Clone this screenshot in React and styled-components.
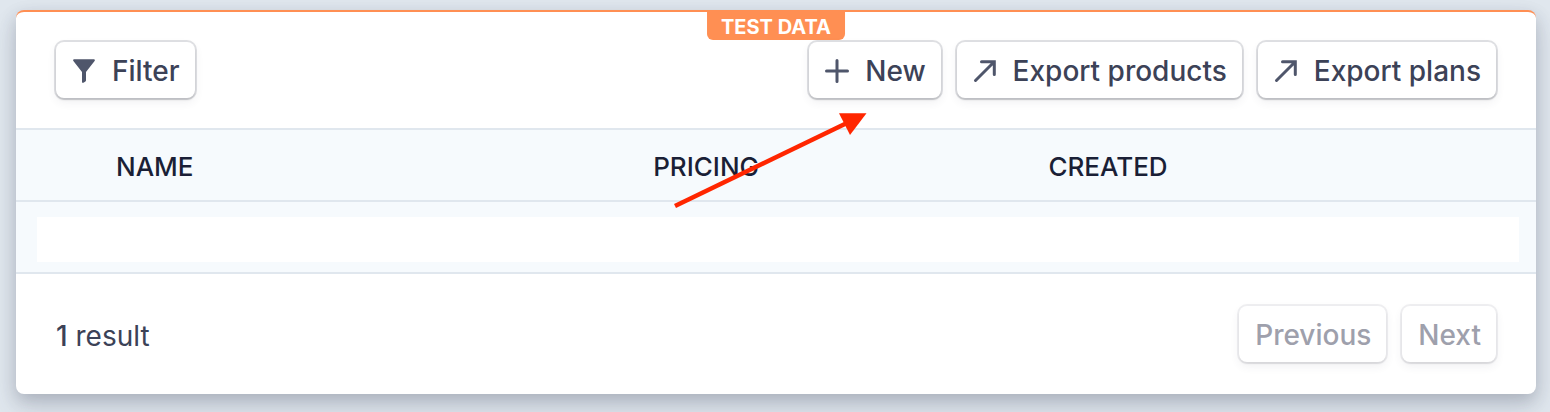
import React from 'react';
import styled, { createGlobalStyle } from 'styled-components';

const GlobalStyle = createGlobalStyle`
  * {
    box-sizing: border-box;
  }
  body {
    margin: 0;
    background-color: #e0e7ee;
    font-family: Inter, "Liberation Sans", sans-serif;
    color: #3c4257;
  }
`;

const Page = styled.main`
  padding: 10px 14px 18px 16px;
`;

const Card = styled.section`
  position: relative;
  background-color: #fff;
  border-top: 2px solid #ff8f53;
  border-radius: 8px;
  box-shadow:
    0 14px 28px 0 rgba(60, 66, 87, 0.14),
    0 6px 16px 0 rgba(60, 66, 87, 0.22);
`;

const TestBadge = styled.span`
  position: absolute;
  top: 0;
  left: 50%;
  transform: translateX(-50%);
  padding: 3px 14px 1px;
  border-radius: 0 0 6px 6px;
  background-color: #ff8f53;
  color: #fff;
  font-size: 20px;
  font-weight: 700;
  line-height: 24px;
  white-space: nowrap;
`;

const Toolbar = styled.div`
  display: flex;
  align-items: center;
  justify-content: space-between;
  padding: 30px 40px;
`;

const ButtonGroup = styled.div`
  display: flex;
  gap: 16px;
`;

const Button = styled.button`
  display: inline-flex;
  align-items: center;
  gap: 16px;
  height: 56px;
  padding: 2px 15px 0 16px;
  border: 0;
  border-radius: 8px;
  background-color: #fff;
  color: #3c4257;
  font-family: inherit;
  font-size: 28px;
  font-weight: 500;
  line-height: 40px;
  white-space: nowrap;
  cursor: pointer;
  box-shadow:
    0 0 0 2px rgba(60, 66, 87, 0.16),
    0 2px 2px 0 rgba(0, 0, 0, 0.12),
    0 4px 10px 0 rgba(60, 66, 87, 0.08);

  &:disabled {
    color: #9ea0ac;
    cursor: default;
    box-shadow:
      0 0 0 2px rgba(60, 66, 87, 0.08),
      0 2px 2px 0 rgba(0, 0, 0, 0.06),
      0 4px 10px 0 rgba(60, 66, 87, 0.08);
  }
`;

const Icon = styled.svg`
  flex: none;
  width: 24px;
  height: 24px;
  color: #4f566b;
`;

const Anchor = styled.div`
  position: relative;
`;

// hangs below the New button, over the table header
const Arrow = styled.svg`
  position: absolute;
  top: 68px;
  left: -138px;
  width: 200px;
  height: 100px;
  z-index: 1;
  pointer-events: none;
`;

const Table = styled.table`
  width: 100%;
  table-layout: fixed;
  border-collapse: collapse;
  background-color: #f6fafd;
`;

const HeadCell = styled.th`
  width: ${props => props.$width};
  height: 72px;
  padding: 4px 0 0 ${props => (props.$first ? '100px' : '14px')};
  border-top: 2px solid #e0e7ee;
  border-bottom: 2px solid #e0e7ee;
  color: #1a1f36;
  font-size: 26px;
  font-weight: 500;
  line-height: 32px;
  text-align: left;
`;

const RowCell = styled.td`
  padding: 15px 17px 10px 21px;
  border-bottom: 2px solid #e0e7ee;
`;

const EmptyRow = styled.div`
  height: 45px;
  background-color: #fff;
`;

const Footer = styled.div`
  display: flex;
  align-items: center;
  justify-content: space-between;
  padding: 32px 40px;
`;

const ResultCount = styled.span`
  padding-top: 4px;
  font-size: 28px;
  line-height: 40px;
`;

const Count = styled.span`
  font-weight: 500;
`;

const columns = [
  { name: 'NAME', width: '41%' },
  { name: 'PRICING', width: '26%' },
  { name: 'CREATED', width: '33%' },
];

const FilterIcon = () => (
  <Icon viewBox="0 0 24 24" aria-hidden="true">
    <path
      fill="currentColor"
      d="M2.3 0.2h19.4c1 0 1.5 1.1.9 1.9L14 13v8.3c0 .5-.2.9-.6 1.2l-1.9 1.2c-.6.4-1.5 0-1.500-.8V13L1.400 2.100C.8 1.300 1.300.2 2.300.2z"
    />
  </Icon>
);

const PlusIcon = () => (
  <Icon viewBox="0 0 24 24" aria-hidden="true">
    <path
      fill="none"
      stroke="currentColor"
      strokeWidth="3"
      strokeLinecap="round"
      d="M12 1.500v21M1.500 12h21"
    />
  </Icon>
);

const ExportIcon = () => (
  <Icon viewBox="0 0 24 24" aria-hidden="true">
    <path
      fill="none"
      stroke="currentColor"
      strokeWidth="3"
      strokeLinecap="round"
      strokeLinejoin="miter"
      d="M2.500 21.500L21 3M8.500 2.700h12.800v12.800"
    />
  </Icon>
);

const ProductsTable = () => (
  <Table>
    <thead>
      <tr>
        {columns.map((column, index) => (
          <HeadCell
            key={column.name}
            scope="col"
            $width={column.width}
            $first={index === 0}
          >
            {column.name}
          </HeadCell>
        ))}
      </tr>
    </thead>
    <tbody>
      <tr>
        <RowCell colSpan={columns.length}>
          <EmptyRow />
        </RowCell>
      </tr>
    </tbody>
  </Table>
);

class App extends React.Component {
  render() {
    return (
      <Page>
        <GlobalStyle />
        <Card>
          <TestBadge>TEST DATA</TestBadge>

          <Toolbar>
            <Button type="button">
              <FilterIcon />
              Filter
            </Button>
            <ButtonGroup>
              <Anchor>
                <Button type="button">
                  <PlusIcon />
                  New
                </Button>
                <Arrow viewBox="0 0 200 100" aria-hidden="true">
                  <path stroke="#ff2600" strokeWidth="4.600" d="M4 96L178 12" />
                  <path fill="#ff2600" d="M195.500 3.200L168 3.200L179 25z" />
                </Arrow>
              </Anchor>
              <Button type="button">
                <ExportIcon />
                Export products
              </Button>
              <Button type="button">
                <ExportIcon />
                Export plans
              </Button>
            </ButtonGroup>
          </Toolbar>

          <ProductsTable />

          <Footer>
            <ResultCount>
              <Count>1</Count> result
            </ResultCount>
            <ButtonGroup>
              <Button type="button" disabled>
                Previous
              </Button>
              <Button type="button" disabled>
                Next
              </Button>
            </ButtonGroup>
          </Footer>
        </Card>
      </Page>
    );
  }
}

export default App;
